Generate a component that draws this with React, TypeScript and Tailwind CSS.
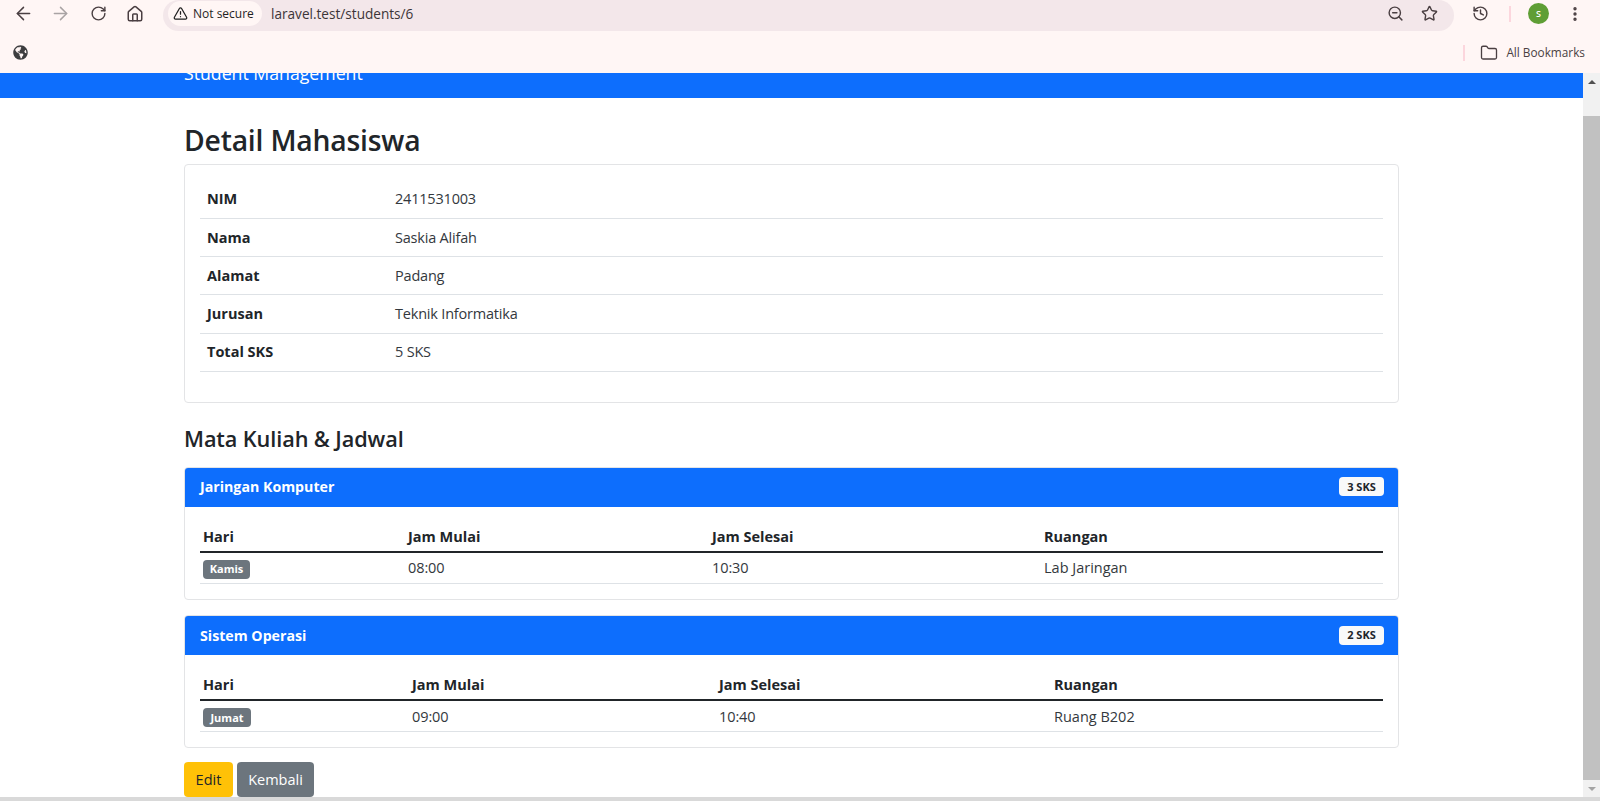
import {
  ArrowLeft,
  ArrowRight,
  RotateCw,
  House,
  TriangleAlert,
  ZoomOut,
  Star,
  History,
  Folder,
  EllipsisVertical,
} from "lucide-react";
import { FaGlobeAmericas } from "react-icons/fa";

const details = [
  { label: "NIM", value: "2411531003" },
  { label: "Nama", value: "Saskia Alifah" },
  { label: "Alamat", value: "Padang" },
  { label: "Jurusan", value: "Teknik Informatika" },
  { label: "Total SKS", value: "5 SKS" },
];

function BrowserBar() {
  return (
    <div className="h-[73px] shrink-0 bg-[#fff6f5] text-[#4a3f42]">
      <div className="flex h-[36px] items-start">
        <div className="flex h-[27px] w-[163px] shrink-0 items-center pl-[13px]">
          <ArrowLeft className="h-[21px] w-[21px]" strokeWidth={1.7} />
          <ArrowRight className="ml-[16px] h-[21px] w-[21px] text-[#a9a3a4]" strokeWidth={1.7} />
          <RotateCw className="ml-[19px] h-[17px] w-[17px]" strokeWidth={2} />
          <House className="ml-[19px] h-[18px] w-[18px]" strokeWidth={2} />
        </div>
        <div className="flex h-[31px] w-[1291px] shrink-0 items-start rounded-full bg-[#f3e7ea] pl-[5px] pr-[16px] pt-[1px]">
          <div className="flex h-[25px] w-[94px] items-center rounded-full bg-[#fff6f5] pl-[5px] text-[#1f1f1f]">
            <TriangleAlert className="h-[15px] w-[15px]" strokeWidth={2} />
            <span className="ml-[5px] text-[12px] font-medium">Not secure</span>
          </div>
          <span className="ml-[9px] text-[13.6px] leading-[25px] text-[#3c3538]">laravel.test/students/6</span>
          <ZoomOut className="ml-auto mt-[4px] h-[17px] w-[17px]" strokeWidth={2} />
          <Star className="ml-[17px] mt-[4px] h-[17px] w-[17px]" strokeWidth={2} />
        </div>
        <div className="flex h-[27px] flex-1 items-center">
          <History className="ml-[18px] h-[17px] w-[17px]" strokeWidth={2} />
          <div className="ml-[20px] h-[16px] w-[2px] bg-[#fcd6dd]" />
          <div className="ml-[17px] flex h-[21px] w-[21px] items-center justify-center rounded-full bg-[#5f9e35] text-[9px] font-semibold text-white">
            S
          </div>
          <EllipsisVertical className="ml-[17px] h-[18px] w-[18px]" strokeWidth={2.5} />
        </div>
      </div>
      <div className="flex h-[37px] items-center pb-[4px] pl-[13px] pr-[15px]">
        <FaGlobeAmericas className="h-[15px] w-[15px] text-[#3d3d3f]" />
        <div className="ml-auto h-[16px] w-[2px] bg-[#fcd6dd]" />
        <Folder className="ml-[15px] h-[18px] w-[18px]" strokeWidth={1.75} />
        <span className="ml-[8px] text-[11.8px]">All Bookmarks</span>
      </div>
    </div>
  );
}

function Badge({ children, className }: { children: React.ReactNode; className: string }) {
  return (
    <span className={`inline-flex h-[19px] items-center justify-center rounded-[4px] text-[11px] font-bold ${className}`}>
      {children}
    </span>
  );
}

function CourseCard({
  name,
  sks,
  day,
  dayWidth,
  start,
  end,
  room,
  cols,
}: {
  name: string;
  sks: string;
  day: string;
  dayWidth: string;
  start: string;
  end: string;
  room: string;
  cols: string[];
}) {
  return (
    <div className="overflow-hidden rounded-[4px] border border-[#e3e4e6]">
      <div className="flex h-[39px] items-center justify-between bg-[#0d6efd] pb-[1px] pl-[15px] pr-[14px] text-white">
        <span className="text-[14.2px] font-bold">{name}</span>
        <Badge className="w-[45px] bg-[#f8f9fa] text-[#212529]">{sks}</Badge>
      </div>
      <div className="p-[15px]">
        <table className="w-full table-fixed border-collapse text-[14.5px] text-[#212529]">
          <colgroup>
            <col className={cols[0]} />
            <col className={cols[1]} />
            <col className={cols[2]} />
            <col />
          </colgroup>
          <thead>
            <tr className="h-[30px] border-b-2 border-[#212529] text-left">
              <th className="px-[3px] font-bold">Hari</th>
              <th className="px-[4px] font-bold">Jam Mulai</th>
              <th className="px-[4px] font-bold">Jam Selesai</th>
              <th className="px-[4px] font-bold">Ruangan</th>
            </tr>
          </thead>
          <tbody className="text-[#33383d]">
            <tr className="h-[31.5px] border-b border-[#dee2e6]">
              <td className="px-[3px]">
                <Badge className={`${dayWidth} bg-[#6c757d] text-white`}>{day}</Badge>
              </td>
              <td className="px-[4px] tracking-[-0.1px]">{start}</td>
              <td className="px-[4px] tracking-[-0.1px]">{end}</td>
              <td className="px-[4px]">{room}</td>
            </tr>
          </tbody>
        </table>
      </div>
    </div>
  );
}

export default function App() {
  return (
    <div className="flex h-[801px] flex-col overflow-hidden bg-white font-['Open_Sans',sans-serif]">
      <BrowserBar />
      <div className="flex min-h-0 flex-1">
        <main className="min-w-0 flex-1">
          <nav className="h-[25px] overflow-hidden bg-[#0d6efd] pl-[184px] text-white">
            <div className="-mt-[12px] text-[17.7px] leading-[24px]">Student Management</div>
          </nav>
          <div className="ml-[184px] w-[1215px] pt-[22px]">
            <h1 className="h-[32px] text-[28.3px] font-semibold leading-[40px] tracking-[-0.2px] text-[#212529]">
              Detail Mahasiswa
            </h1>
            <div className="mt-[12px] rounded-[4px] border border-[#e3e4e6] px-[15px] pb-[30px] pt-[15px]">
              <table className="w-full table-fixed border-collapse text-[14.5px] text-[#212529]">
                <colgroup>
                  <col className="w-[195px]" />
                  <col />
                </colgroup>
                <tbody>
                  {details.map((row) => (
                    <tr key={row.label} className="h-[38.3px] border-b border-[#dee2e6]">
                      <th className="px-[7px] text-left font-bold">{row.label}</th>
                      <td className="px-0 tracking-[-0.2px] text-[#33383d]">{row.value}</td>
                    </tr>
                  ))}
                </tbody>
              </table>
            </div>
            <h2 className="mb-[13px] mt-[21px] text-[21.7px] font-semibold leading-[30px] tracking-[-0.1px] text-[#212529]">
              Mata Kuliah &amp; Jadwal
            </h2>
            <div className="flex flex-col gap-[15.5px]">
              <CourseCard
                name="Jaringan Komputer"
                sks="3 SKS"
                day="Kamis"
                dayWidth="w-[47px]"
                start="08:00"
                end="10:30"
                room="Lab Jaringan"
                cols={["w-[204px]", "w-[304px]", "w-[332px]"]}
              />
              <CourseCard
                name="Sistem Operasi"
                sks="2 SKS"
                day="Jumat"
                dayWidth="w-[48px]"
                start="09:00"
                end="10:40"
                room="Ruang B202"
                cols={["w-[208px]", "w-[307px]", "w-[335px]"]}
              />
            </div>
            <div className="mt-[14px] flex gap-[4px]">
              <button className="h-[35px] w-[49px] rounded-[4px] bg-[#ffc107] text-[14.5px] text-[#212529]">Edit</button>
              <button className="h-[35px] w-[77px] rounded-[4px] bg-[#6c757d] text-[14.5px] text-white">Kembali</button>
            </div>
          </div>
        </main>
        <div className="flex w-[17px] shrink-0 flex-col items-center bg-[#f1f1f1]">
          <div className="flex h-[17px] w-full items-center justify-center text-[#505050]">
            <div className="h-0 w-0 border-x-[4px] border-b-[4px] border-x-transparent border-b-current" />
          </div>
          <div className="mt-[26px] w-full flex-1 bg-[#c1c1c1]" />
          <div className="flex h-[17px] w-full items-center justify-center text-[#a3a3a3]">
            <div className="h-0 w-0 border-x-[4px] border-t-[4px] border-x-transparent border-t-current" />
          </div>
        </div>
      </div>
      <div className="h-[4px] shrink-0 bg-[#d9d9d9]" />
    </div>
  );
}
